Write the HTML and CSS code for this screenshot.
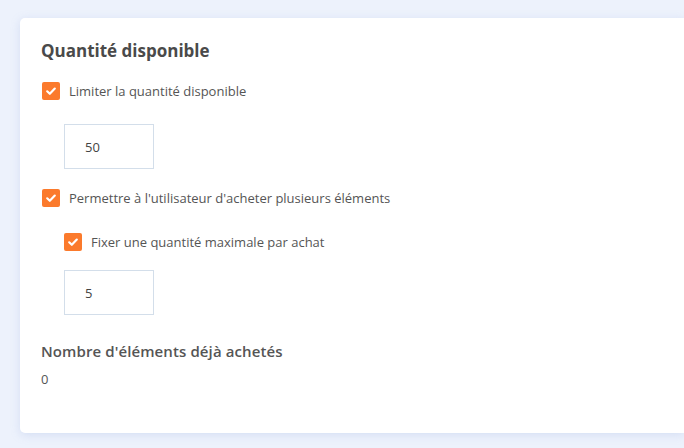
FILE: index.html
```html
<!DOCTYPE html>
<html lang="fr">
<head>
<meta charset="utf-8">
<link rel="stylesheet" href="styles.css">
</head>
<body>
<div class="card">
  <h2 class="title">Quantité disponible</h2>
  <label class="check first">
    <span class="box"><svg viewBox="0 0 18 18" width="18" height="18"><path d="M5.2 9.3 L7.8 11.8 L12.8 6.6" fill="none" stroke="#fff" stroke-width="2.2" stroke-linecap="round" stroke-linejoin="round"/></svg></span>
    <span>Limiter la quantité disponible</span>
  </label>
  <div class="field indent"><span class="input">50</span></div>
  <label class="check">
    <span class="box"><svg viewBox="0 0 18 18" width="18" height="18"><path d="M5.2 9.3 L7.8 11.8 L12.8 6.6" fill="none" stroke="#fff" stroke-width="2.2" stroke-linecap="round" stroke-linejoin="round"/></svg></span>
    <span>Permettre à l'utilisateur d'acheter plusieurs éléments</span>
  </label>
  <label class="check indent sub">
    <span class="box"><svg viewBox="0 0 18 18" width="18" height="18"><path d="M5.2 9.3 L7.8 11.8 L12.8 6.6" fill="none" stroke="#fff" stroke-width="2.2" stroke-linecap="round" stroke-linejoin="round"/></svg></span>
    <span>Fixer une quantité maximale par achat</span>
  </label>
  <div class="field indent last"><span class="input">5</span></div>
  <h3 class="subtitle">Nombre d'éléments déjà achetés</h3>
  <div class="value">0</div>
</div>
</body>
</html>
```

FILE: styles.css
```css
html, body {
  margin: 0;
  padding: 0;
}
body {
  background: #edf2fc;
  font-family: "Open Sans", "Noto Sans", sans-serif;
  color: #555;
  height: 448px;
  overflow: hidden;
  padding: 18px 0 0 20px;
  box-sizing: border-box;
}
.card {
  background: #fff;
  border-radius: 5px 0 0 5px;
  box-shadow: 0 2px 10px rgba(140, 165, 220, 0.25);
  width: 664px;
  height: 415px;
  box-sizing: border-box;
  padding: 22px 0 0 21px;
}
.title {
  margin: 0;
  font-size: 17px;
  font-weight: 700;
  color: #4a4a4a;
  line-height: 22px;
}
.check {
  display: flex;
  align-items: center;
  gap: 9px;
  font-size: 13px;
  line-height: 18px;
  color: #555;
  margin-left: 1px;
}
.check.first {
  margin-top: 20px;
}
.box {
  width: 18px;
  height: 18px;
  flex: none;
  background: #fb7a2c;
  border-radius: 2px;
  display: flex;
}
.indent {
  margin-left: 23px;
}
.field {
  margin-top: 24px;
  margin-bottom: 20px;
}
.field.last {
  margin-top: 19px;
  margin-bottom: 0;
}
.sub {
  margin-top: 26px;
}
.input {
  display: flex;
  align-items: center;
  width: 90px;
  height: 45px;
  box-sizing: border-box;
  border: 1px solid #d3deea;
  padding-left: 20px;
  font-size: 13px;
  color: #444;
}
.subtitle {
  margin: 27px 0 0;
  font-size: 15px;
  font-weight: 600;
  letter-spacing: 0.1px;
  color: #555;
  line-height: 18px;
}
.value {
  margin-top: 10px;
  font-size: 13px;
  line-height: 18px;
  color: #555;
}
```
